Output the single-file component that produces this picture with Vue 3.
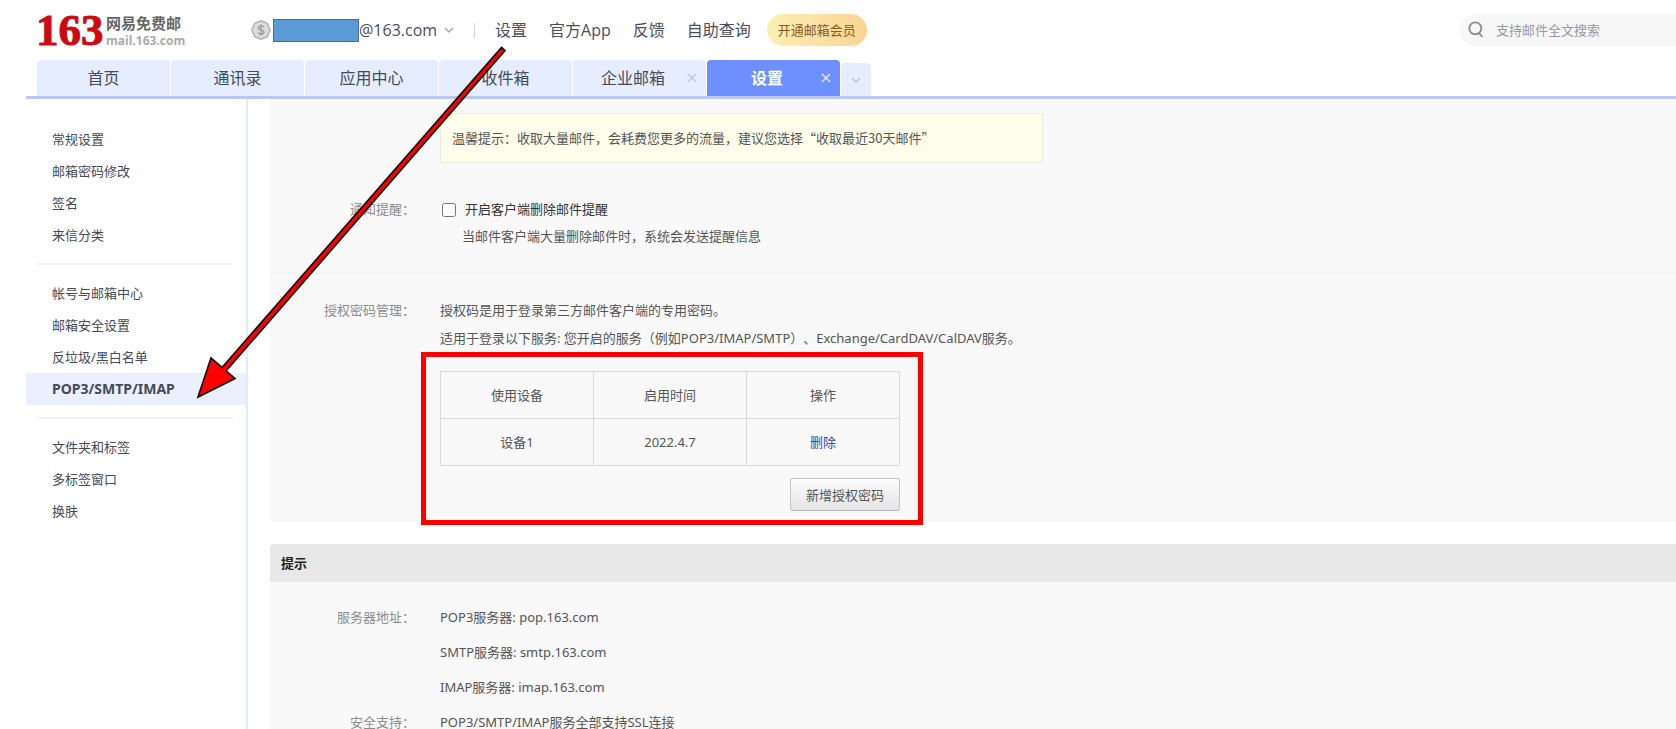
<script setup>
import { ref } from 'vue'

const links = ['设置', '官方App', '反馈', '自助查询']

const tabs = [
  { name: '首页' },
  { name: '通讯录' },
  { name: '应用中心' },
  { name: '收件箱' },
  { name: '企业邮箱', closable: true },
  { name: '设置', closable: true, active: true }
]

const groups = [
  ['常规设置', '邮箱密码修改', '签名', '来信分类'],
  ['帐号与邮箱中心', '邮箱安全设置', '反垃圾/黑白名单', 'POP3/SMTP/IMAP'],
  ['文件夹和标签', '多标签窗口', '换肤']
]
const current = 'POP3/SMTP/IMAP'

const remind = ref(false)
const keyword = ref('')
const devices = [{ name: '设备1', date: '2022.4.7' }]
</script>

<template>
  <div class="page">
    <header class="top">
      <a class="logo" href="#">
        <span class="logo-num">163</span>
        <span class="logo-text">
          <span class="logo-cn">网易免费邮</span>
          <span class="logo-en">mail.163.com</span>
        </span>
      </a>
      <div class="account">
        <svg class="coin" viewBox="0 0 20 20" aria-hidden="true">
          <path d="M10 .8 16.2 3.2 19.2 10 16.2 16.8 10 19.2 3.8 16.8 .8 10 3.8 3.2Z" fill="#dcdcdc" stroke="#b4b4b4" stroke-width="1.6" stroke-linejoin="round" />
          <path d="M12.8 7.4C12.4 6.2 11.4 5.8 10 5.8 8.400 5.8 7.300 6.500 7.300 7.800 7.300 10.600 12.900 9.200 12.900 12.100 12.900 13.500 11.700 14.200 10 14.200 8.400 14.200 7.300 13.600 7 12.300M10 4.300V15.700" fill="none" stroke="#999" stroke-width="1.3" />
        </svg>
        <span class="mask"></span>
        <span class="domain">@163.com</span>
        <svg class="chev" viewBox="0 0 10 6" aria-hidden="true"><path d="M1 1 5 5 9 1" fill="none" stroke="#a2a5ab" stroke-width="1.300" /></svg>
      </div>
      <span class="bar"></span>
      <nav class="links">
        <a v-for="l in links" :key="l" href="#">{{ l }}</a>
      </nav>
      <button class="vip" type="button">开通邮箱会员</button>
      <label class="search">
        <svg viewBox="0 0 16 18" aria-hidden="true"><circle cx="7.300" cy="7.300" r="6" fill="none" stroke="#888b92" stroke-width="1.800" /><path d="M10.300 11.500 14.500 16" stroke="#888b92" stroke-width="1.800" fill="none" /></svg>
        <input v-model="keyword" type="text" placeholder="支持邮件全文搜索" aria-label="支持邮件全文搜索" />
      </label>
    </header>

    <nav class="tabs">
      <div v-for="(t, i) in tabs" :key="i" class="tab" :class="{ active: t.active, closable: t.closable }">
        <a href="#">{{ t.name }}</a>
        <button v-if="t.closable" type="button" aria-label="关闭">
          <svg viewBox="0 0 10 10" aria-hidden="true"><path d="M1 1 9 9M9 1 1 9" fill="none" stroke="currentColor" stroke-width="1.500" /></svg>
        </button>
      </div>
      <button class="more" type="button" aria-label="更多">
        <svg class="chev" viewBox="0 0 10 6" aria-hidden="true"><path d="M1 1 5 5 9 1" fill="none" stroke="#b9c0d0" stroke-width="1.300" /></svg>
      </button>
    </nav>

    <div class="body">
      <aside class="side">
        <ul v-for="(g, i) in groups" :key="i">
          <li v-for="s in g" :key="s" :class="{ on: s === current }"><a href="#">{{ s }}</a></li>
        </ul>
      </aside>

      <main class="main">
        <section class="panel first">
          <p class="notice">温馨提示：收取大量邮件，会耗费您更多的流量，建议您选择“收取最近30天邮件”</p>
          <div class="row remind">
            <span class="name">通知提醒：</span>
            <div class="value">
              <label class="check"><input v-model="remind" type="checkbox" />开启客户端删除邮件提醒</label>
              <p class="hint">当邮件客户端大量删除邮件时，系统会发送提醒信息</p>
            </div>
          </div>
          <div class="row auth">
            <span class="name">授权密码管理：</span>
            <div class="value">
              <p>授权码是用于登录第三方邮件客户端的专用密码。</p>
              <p>适用于登录以下服务: 您开启的服务（例如POP3/IMAP/SMTP）、Exchange/CardDAV/CalDAV服务。</p>
              <div class="devices">
                <table>
                  <thead>
                    <tr><th>使用设备</th><th>启用时间</th><th>操作</th></tr>
                  </thead>
                  <tbody>
                    <tr v-for="d in devices" :key="d.name">
                      <td>{{ d.name }}</td><td>{{ d.date }}</td><td><a href="#">删除</a></td>
                    </tr>
                  </tbody>
                </table>
                <button class="add" type="button">新增授权密码</button>
                <span class="frame"></span>
              </div>
            </div>
          </div>
        </section>

        <section class="panel tips">
          <h2>提示</h2>
          <div class="row">
            <span class="name">服务器地址：</span>
            <div class="value">
              <p>POP3服务器: pop.163.com</p>
              <p>SMTP服务器: smtp.163.com</p>
              <p>IMAP服务器: imap.163.com</p>
            </div>
          </div>
          <div class="row">
            <span class="name">安全支持：</span>
            <div class="value"><p>POP3/SMTP/IMAP服务全部支持SSL连接</p></div>
          </div>
        </section>
      </main>
    </div>

    <svg class="arrow" viewBox="0 0 520 410" aria-hidden="true">
      <path d="M501.500 47.500 505 50.500 226 371 235 378.500 198 397 211 358 222 367.500Z" fill="#f00" stroke="#111" stroke-width="1.700" stroke-linejoin="miter" />
    </svg>
  </div>
</template>

<style>
body {
  margin: 0;
  background: #fff;
}
</style>

<style scoped>
.page {
  position: relative;
  display: flex;
  flex-direction: column;
  height: 100vh;
  overflow: hidden;
  color: #555;
  font: 13px/28px "Noto Sans", "Noto Sans CJK SC", sans-serif;
  text-spacing-trim: space-all;
}
p, h2, ul {
  margin: 0;
  padding: 0;
  list-style: none;
}
a {
  color: inherit;
  text-decoration: none;
}
button, input {
  font: inherit;
  color: inherit;
}
button {
  border: 0;
  padding: 0;
  background: none;
}

/* top bar */
.top {
  display: flex;
  align-items: center;
  flex: none;
  height: 60px;
  padding-left: 36px;
  font-family: "Open Sans", "Noto Sans CJK SC", sans-serif;
  font-size: 16px;
  color: #4a4f60;
}
.logo {
  display: flex;
  align-items: center;
  width: 215px;
}
.logo-num {
  width: 70px;
  font: bold 45px/60px "Liberation Serif", serif;
  color: #cc0a14;
  -webkit-text-stroke: 1px #cc0a14;
}
.logo-text {
  display: flex;
  flex-direction: column;
  padding-top: 3px;
  font-weight: bold;
}
.logo-cn {
  font-size: 15px;
  line-height: 18px;
  color: #666;
}
.logo-en {
  font-size: 12px;
  line-height: 18px;
  color: #aaa;
}
.account {
  display: flex;
  align-items: center;
}
.coin {
  width: 20px;
  height: 20px;
  margin-right: 2px;
}
.mask {
  box-sizing: border-box;
  width: 86px;
  height: 23px;
  border: 1px solid #41719c;
  background: #5b9bd5;
}
.domain {
  width: 85px;
}
.chev {
  width: 10px;
  height: 6px;
}
.bar {
  width: 1px;
  height: 15px;
  margin: 0 20px;
  background: #d8d8dc;
}
.links {
  display: flex;
  gap: 22px;
}
.vip {
  width: 100px;
  height: 32px;
  margin-left: 16px;
  border-radius: 16px;
  background: linear-gradient(90deg, #fcefb4, #f9d594);
  color: #8a5a1c;
  font-size: 13px;
}
.search {
  display: flex;
  align-items: center;
  gap: 12px;
  box-sizing: border-box;
  width: 216px;
  height: 32px;
  margin-left: auto;
  padding-left: 8px;
  border-radius: 16px 0 0 16px;
  background: #f7f7f7;
}
.search svg {
  width: 16px;
  height: 18px;
}
.search input {
  flex: 1;
  min-width: 0;
  border: 0;
  padding: 0;
  outline: 0;
  background: none;
  font-size: 13px;
}
.search input::placeholder {
  color: #9599a3;
}

/* tabs */
.tabs {
  display: flex;
  align-items: flex-end;
  gap: 1px;
  flex: none;
  margin-left: 26px;
  padding-left: 11px;
  border-bottom: 3px solid #b9c7f1;
}
.tab {
  position: relative;
  width: 133px;
  border-radius: 4px 4px 0 0;
  background: #e6edff;
  color: #444a5c;
  font-size: 16px;
  line-height: 36px;
  text-align: center;
}
.tab a {
  display: block;
}
.tab.closable a {
  padding-right: 13px;
}
.tab button {
  position: absolute;
  top: 13px;
  right: 9px;
  display: flex;
  color: #c3c9d8;
}
.tab button svg {
  width: 10px;
  height: 10px;
}
.tab.active {
  background: #6e8fff;
  color: #fff;
  font-weight: bold;
}
.tab.active button {
  color: #dfe7ff;
}
.more {
  display: flex;
  align-items: center;
  justify-content: center;
  width: 30px;
  height: 33px;
  border-radius: 4px 4px 0 0;
  background: #e6edff;
}

/* sidebar */
.body {
  display: flex;
  flex: 1;
  min-height: 0;
}
.side {
  flex: none;
  width: 220px;
  margin-left: 26px;
  padding-top: 24px;
  border-right: 2px solid #e3eafe;
  color: #444a5a;
}
.side ul + ul::before {
  content: "";
  display: block;
  height: 2px;
  margin: 12px 13px 12px 11px;
  background: #f2f2f2;
}
.side li {
  padding-left: 26px;
  line-height: 32px;
}
.side li.on {
  background: #ebf0fe;
  font-size: 14px;
  font-weight: bold;
}

/* content */
.main {
  flex: 1;
  min-width: 0;
  margin-left: 22px;
  overflow: hidden;
}
.panel {
  background: #f9f9f9;
}
.first {
  margin-bottom: 22px;
  padding: 14px 0 11px;
  border-radius: 0 0 0 4px;
}
.notice {
  box-sizing: border-box;
  max-width: 603px;
  margin-left: 170px;
  padding: 0 11px;
  border: 1px solid #ecedd8;
  background: #fffeec;
  font-family: "Noto Sans CJK SC", sans-serif;
  line-height: 48px;
}
.row {
  display: flex;
}
.name {
  flex: none;
  width: 145px;
  margin-right: 25px;
  color: #8c8c8c;
  text-align: right;
}
.remind {
  padding: 33px 0 23px;
  border-bottom: 1px solid #f1f1f1;
  line-height: 27px;
}
.check {
  display: flex;
  align-items: center;
  color: #333;
}
.check input {
  width: 14px;
  height: 14px;
  margin: 0 9px 0 2px;
}
.hint {
  padding-left: 22px;
}
.auth {
  padding-top: 22px;
}
.devices {
  position: relative;
  width: 460px;
  margin-top: 19px;
}
table {
  width: 100%;
  table-layout: fixed;
  border-collapse: collapse;
}
th, td {
  height: 46px;
  padding: 0;
  border: 1px solid #d9d9d9;
  font-weight: normal;
  text-align: center;
}
td a {
  color: #3a4aa8;
}
.add {
  display: block;
  box-sizing: border-box;
  width: 110px;
  height: 33px;
  margin: 12px 0 0 auto;
  border: 1px solid #c4c4c4;
  border-bottom-color: #b4b4b4;
  border-radius: 3px;
  background: linear-gradient(#fdfdfd, #e4e4e4);
}
.frame {
  position: absolute;
  inset: -19px -23px -14px -19px;
  border: 5px solid #f00;
  pointer-events: none;
}
.tips {
  border-radius: 4px 0 0 0;
  overflow: hidden;
  line-height: 35px;
}
.tips h2 {
  margin-bottom: 18px;
  padding-left: 11px;
  background: #e8e8e8;
  color: #222;
  font-size: 13px;
  line-height: 38px;
}
.arrow {
  position: absolute;
  top: 0;
  left: 0;
  width: 520px;
  height: 410px;
  pointer-events: none;
}
</style>
